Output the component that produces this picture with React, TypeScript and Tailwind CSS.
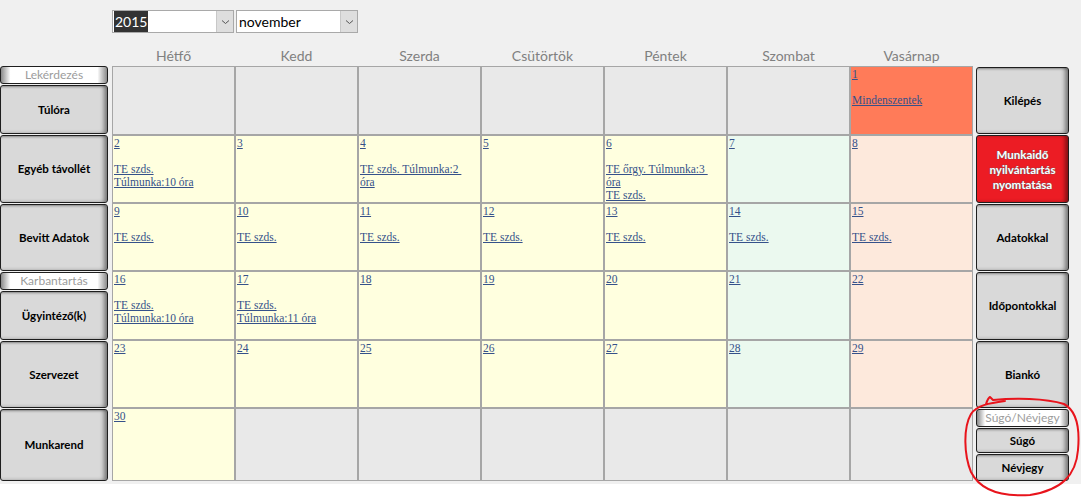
import React from "react";

type Cell = { day?: number; kind: "empty" | "work" | "sat" | "sun" | "holiday"; lines?: string[][] };

const DAYS = ["Hétfő", "Kedd", "Szerda", "Csütörtök", "Péntek", "Szombat", "Vasárnap"];

const w = (day: number, lines: string[][] = []): Cell => ({ day, kind: "work", lines });
const sat = (day: number, lines: string[][] = []): Cell => ({ day, kind: "sat", lines });
const sun = (day: number, lines: string[][] = []): Cell => ({ day, kind: "sun", lines });
const empty: Cell = { kind: "empty" };

const CELLS: Cell[] = [
  empty, empty, empty, empty, empty, empty,
  { day: 1, kind: "holiday", lines: [["Mindenszentek"]] },
  w(2, [["TE szds."], ["Túlmunka:10 óra"]]),
  w(3),
  w(4, [["TE szds. Túlmunka:2 ", "óra"]]),
  w(5),
  w(6, [["TE őrgy. Túlmunka:3 ", "óra"], ["TE szds."]]),
  sat(7),
  sun(8),
  w(9, [["TE szds."]]),
  w(10, [["TE szds."]]),
  w(11, [["TE szds."]]),
  w(12, [["TE szds."]]),
  w(13, [["TE szds."]]),
  sat(14, [["TE szds."]]),
  sun(15, [["TE szds."]]),
  w(16, [["TE szds."], ["Túlmunka:10 óra"]]),
  w(17, [["TE szds."], ["Túlmunka:11 óra"]]),
  w(18), w(19), w(20), sat(21), sun(22),
  w(23), w(24), w(25), w(26), w(27), sat(28), sun(29),
  w(30), empty, empty, empty, empty, empty, empty,
];

const cellBg: Record<Cell["kind"], string> = {
  empty: "bg-[#e9e9e9]",
  work: "bg-[#ffffdf]",
  sat: "bg-[#ebf9ef]",
  sun: "bg-[#fde9dc]",
  holiday: "bg-[#ff7b59]",
};

function Btn({ label, h }: { label: string; h: string }) {
  return (
    <div
      className={`${h} flex items-center justify-center rounded-[3px] border border-[#1e1e1e] bg-[#d9d9d9] text-center text-[11.5px] font-bold text-black shadow-[inset_-4px_0_4px_-1px_rgba(0,0,0,0.45),inset_0_2px_2px_-1px_rgba(0,0,0,0.25)]`}
    >
      {label}
    </div>
  );
}

function Label({ label }: { label: string }) {
  return (
    <div className="flex h-[18px] items-center justify-center rounded-[3px] border border-[#1e1e1e] bg-[linear-gradient(90deg,#8a8a8a_0%,#ffffff_9%,#ffffff_91%,#8a8a8a_100%)] text-[12px] text-[#9c9c9c]">
      {label}
    </div>
  );
}

function Select({ value, selected }: { value: string; selected?: boolean }) {
  return (
    <div className="flex h-[23px] w-[122px] items-stretch border border-[#a9a9a9] bg-white">
      <div className="flex flex-1 items-center pl-[1px] text-[14px] text-black">
        <span className={selected ? "bg-[#333333] px-[1px] text-white" : "pl-[1px]"}>{value}</span>
      </div>
      <div className="flex w-[17px] items-center justify-center border-l border-[#c8c8c8] bg-[#dedede]">
        <svg width="9" height="6" viewBox="0 0 9 6">
          <path d="M1 1.5 L4.5 4.5 L8 1.5" fill="none" stroke="#555" strokeWidth="1" />
        </svg>
      </div>
    </div>
  );
}

export default function App() {
  return (
    <div
      className="relative h-[499px] w-[1081px] overflow-hidden bg-white"
      style={{ fontFamily: "Lato, 'Liberation Sans', sans-serif" }}
    >
      <div className="h-[484px] bg-[#f0f0f0]">
        <div className="flex gap-[2px] pl-[112px] pt-[10px]">
          <Select value="2015" selected />
          <Select value="november" />
        </div>

        <div className="ml-[112px] mt-[12px] grid h-[21px] w-[861px] grid-cols-7 items-center text-center text-[14px] text-[#808080]">
          {DAYS.map((d) => (
            <div key={d}>{d}</div>
          ))}
        </div>

        <div className="flex">
          <div className="flex w-[108px] flex-col gap-[1px]">
            <Label label="Lekérdezés" />
            <Btn label="Túlóra" h="h-[49px]" />
            <Btn label="Egyéb távollét" h="h-[68px]" />
            <Btn label="Bevitt Adatok" h="h-[67px]" />
            <Label label="Karbantartás" />
            <Btn label="Ügyintéző(k)" h="h-[49px]" />
            <Btn label="Szervezet" h="h-[67px]" />
            <Btn label="Munkarend" h="h-[72px]" />
          </div>

          <div
            className="ml-[4px] grid w-[861px] grid-cols-7 grid-rows-[67px_66px_66px_67px_66px_71px] gap-[2px] border border-[#a6a6a6] bg-[#a6a6a6]"
            style={{ fontFamily: "'Liberation Serif', serif" }}
          >
            {CELLS.map((c, i) => (
              <div key={i} className={`${cellBg[c.kind]} pl-[1px] pt-[1px] text-[11.5px] leading-[13px] text-[#35518a]`}>
                {c.day !== undefined && (
                  <>
                    <div>
                      <span className="underline">{c.day}</span>
                    </div>
                    {c.lines && c.lines.length > 0 && <div className="h-[13px]" />}
                    {c.lines?.map((parts, j) =>
                      parts.map((p, k) => (
                        <div key={`${j}-${k}`}>
                          <span className="whitespace-pre underline">{p}</span>
                        </div>
                      ))
                    )}
                  </>
                )}
              </div>
            ))}
          </div>

          <div className="ml-[3px] mt-[1px] flex w-[93px] flex-col gap-[1px]">
            <Btn label="Kilépés" h="h-[67px]" />
            <div className="flex h-[68px] items-center justify-center rounded-[3px] border border-[#1e1e1e] bg-[#ec1c24] text-center text-[11.5px] font-bold leading-[15px] text-white shadow-[inset_-4px_0_4px_-1px_rgba(0,0,0,0.45)] [text-shadow:0_0_1px_#666,0_0_1px_#666]">
              Munkaidő
              <br />
              nyilvántartás
              <br />
              nyomtatása
            </div>
            <Btn label="Adatokkal" h="h-[67px]" />
            <Btn label="Időpontokkal" h="h-[68px]" />
            <Btn label="Biankó" h="h-[67px]" />
            <Label label="Súgó/Névjegy" />
            <Btn label="Súgó" h="h-[25px]" />
            <Btn label="Névjegy" h="h-[27px]" />
          </div>
        </div>
      </div>

      <svg className="pointer-events-none absolute inset-0" width="1081" height="499" viewBox="0 0 1081 499">
        <path
          d="M986 404 C987 401 988 398 990 397 C991 398 992 399 993 400 C1015 398 1045 398 1064 404 C1077 411 1080 428 1078 450 C1076 475 1062 490 1030 495 C1000 497 980 490 971 472 C964 455 963 428 971 414 C977 405 990 403 1005 401"
          fill="none"
          stroke="#e8141c"
          strokeWidth="2"
          strokeLinecap="round"
          strokeLinejoin="round"
        />
      </svg>
    </div>
  );
}
